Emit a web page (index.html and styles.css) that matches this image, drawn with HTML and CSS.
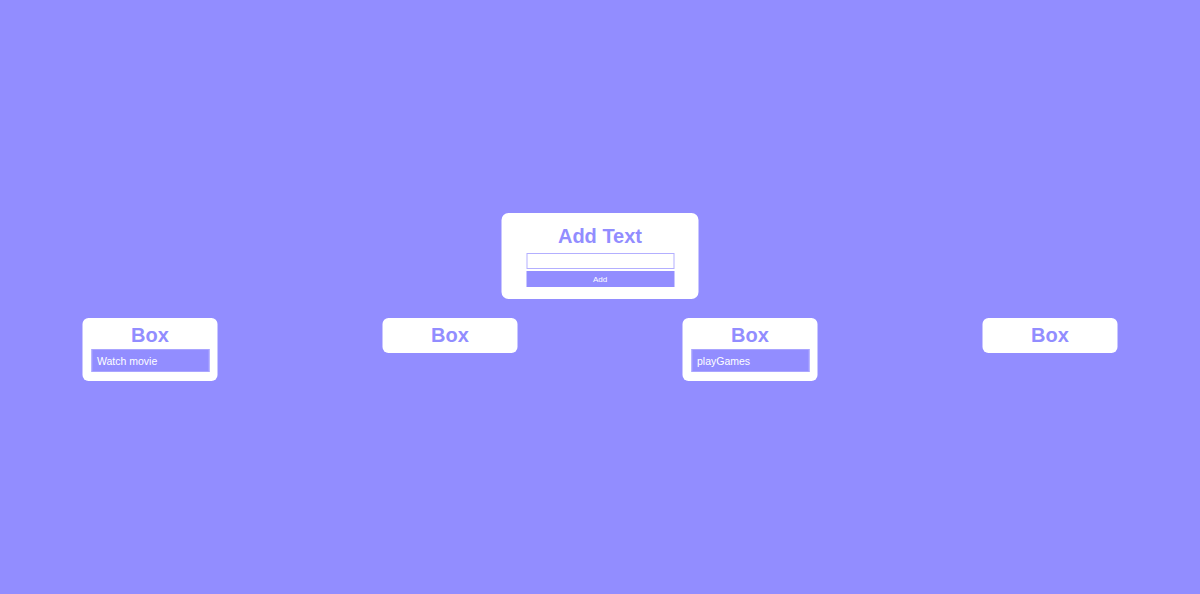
FILE: index.html
```html
<!DOCTYPE html>
<html>
<head>
<meta charset="utf-8">
<link rel="stylesheet" href="styles.css">
</head>
<body>
<main class="page">
  <section class="add-card">
    <h2 class="add-title">Add Text</h2>
    <input class="add-input" type="text">
    <button class="add-btn">Add</button>
  </section>
  <section class="boxes">
    <div class="col">
      <div class="box">
        <h3 class="box-title">Box</h3>
        <div class="item">Watch movie</div>
      </div>
    </div>
    <div class="col">
      <div class="box">
        <h3 class="box-title">Box</h3>
      </div>
    </div>
    <div class="col">
      <div class="box">
        <h3 class="box-title">Box</h3>
        <div class="item">playGames</div>
      </div>
    </div>
    <div class="col">
      <div class="box">
        <h3 class="box-title">Box</h3>
      </div>
    </div>
  </section>
</main>
</body>
</html>
```
FILE: styles.css
```css
html, body {
  margin: 0;
  padding: 0;
  height: 100%;
}
body {
  background: #928dff;
  font-family: "Liberation Sans", Arial, sans-serif;
}
.page {
  min-height: 100vh;
  display: flex;
  flex-direction: column;
  align-items: center;
  justify-content: center;
  gap: 19px;
}
.add-card {
  background: #fff;
  border-radius: 7px;
  width: 197px;
  height: 86px;
  box-sizing: border-box;
  padding: 10px 24px 12px 25px;
  display: flex;
  flex-direction: column;
  transform: translateX(-0.5px);
}
.add-title {
  margin: 0 0 4px;
  font-size: 20px;
  line-height: 26px;
  font-weight: bold;
  color: #928dff;
  text-align: center;
}
.add-input {
  display: block;
  box-sizing: border-box;
  width: 148px;
  height: 16px;
  margin: 0;
  padding: 0 3px;
  border: 1px solid #b3afff;
  outline: none;
  background: #fff;
}
.add-btn {
  display: block;
  box-sizing: border-box;
  width: 148px;
  height: 16px;
  margin: 2px 0 0;
  padding: 1px 0 0;
  border: none;
  background: #928dff;
  color: #fff;
  font-family: "Liberation Sans", Arial, sans-serif;
  font-size: 8px;
  line-height: 15px;
}
.boxes {
  display: grid;
  grid-template-columns: repeat(4, 300px);
  align-items: start;
  width: 1200px;
}
.col {
  display: flex;
  justify-content: center;
}
.box {
  background: #fff;
  border-radius: 6px;
  width: 135px;
  box-sizing: border-box;
  padding: 5px 8px 6px 9px;
  transform: translateX(-0.5px);
}
.box-title {
  margin: 0;
  font-size: 20px;
  line-height: 24px;
  font-weight: bold;
  color: #928dff;
  text-align: center;
}
.item {
  margin: 2px 0 3px;
  height: 23px;
  box-sizing: border-box;
  border: 1px solid #aaa5ff;
  background: #928dff;
  color: #fff;
  font-size: 10.5px;
  line-height: 22px;
  padding: 0 5px;
}
```
